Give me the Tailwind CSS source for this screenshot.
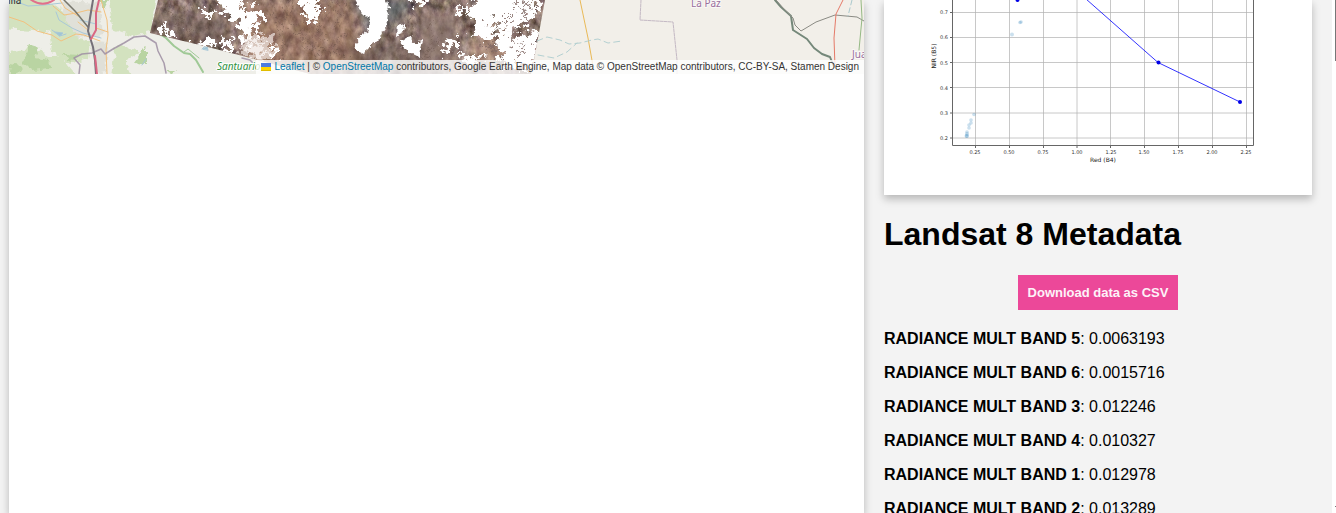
<!DOCTYPE html>
<html lang="en">
<head>
<meta charset="utf-8">
<meta name="viewport" content="width=device-width, initial-scale=1">
<title>Landsat 8 Metadata</title>
<script src="https://cdn.jsdelivr.net/npm/@tailwindcss/browser@4"></script>
</head>
<body class="h-screen overflow-hidden bg-[#f3f3f3] font-['Liberation_Sans',Arial,sans-serif] text-base text-black">
<div class="flex h-full">
  <main class="ml-[9px] min-w-0 flex-1 bg-white shadow-[0_4px_8px_rgba(0,0,0,0.25)]">
    <section class="relative h-[74px] overflow-hidden" aria-label="Map">
      <svg class="block h-full w-full" viewBox="9 0 855 74" preserveAspectRatio="xMinYMin slice" fill="none" stroke-linecap="round" stroke-linejoin="round">
        <defs>
          <clipPath id="scene"><path d="M158 0L150 33L204 46L258 60L310 74H531L534 60L545 0Z"/></clipPath>
          <filter id="terrain" x="0" y="0" width="100%" height="100%" color-interpolation-filters="sRGB">
            <feTurbulence type="fractalNoise" baseFrequency="0.13 0.09" numOctaves="5" seed="21"/>
            <feColorMatrix values=".75 0 0 0 .18  .72 .08 0 0 .07  .66 .04 .14 0 .02  0 0 0 0 1"/>
          </filter>
          <filter id="ragged" x="-10%" y="-30%" width="120%" height="160%" color-interpolation-filters="sRGB">
            <feTurbulence type="fractalNoise" baseFrequency="0.16" numOctaves="5" seed="5"/>
            <feDisplacementMap in="SourceGraphic" scale="26" xChannelSelector="R" yChannelSelector="G"/>
          </filter>
          <filter id="rough" x="-5%" y="-20%" width="110%" height="140%" color-interpolation-filters="sRGB">
            <feTurbulence type="fractalNoise" baseFrequency="0.15" numOctaves="3" seed="3"/>
            <feDisplacementMap in="SourceGraphic" scale="8" xChannelSelector="R" yChannelSelector="G"/>
          </filter>
          <filter id="soft" x="-20%" y="-20%" width="140%" height="140%"><feGaussianBlur stdDeviation="6"/></filter>
        </defs>
        <rect x="0" width="1400" height="74" fill="#f2efe9"/>
        <rect x="0" width="325" height="74" fill="#eeeee8"/>
        <g filter="url(#rough)">
          <path fill="#d3e2bf" d="M0 -9H38L60 8L80 32L78 42L56 34L34 30L0 28ZM49 30L75 38L90 42L88 58L70 64L52 52ZM0 54L28 48L42 50L46 58L62 58L84 84H0ZM108 -9H158L151 32L134 36L112 28ZM116 44L140 52L125 61L136 84H110Z"/>
          <path fill="#b9d4a2" d="M30 45L40 48L36 58L48 60L50 68L32 70L23 61ZM143 51L147 47V65L135 62ZM10 64L22 66L17 74H9ZM64 54L78 55L70 62ZM96 0L108 0L104 8ZM166 70L176 70L172 74Z"/>
          <path fill="#e0e0d8" d="M62 2L100 4L104 34L78 38L66 20ZM90 42L108 44L106 72L98 74Z"/>
        </g>
        <g stroke="#a9c8d8" stroke-width="1">
          <path d="M12 0L28 6L44 5L62 3M56 12L59 20L72 28L83 33L101 38M52 30L60 36L66 34M80 20L96 24M142 65L146 59M202 49L206 45"/>
          <path fill="#9fc5d5" d="M55 32L63 33L60 36ZM203 49L207 46L208 50Z"/>
        </g>
        <g stroke="#f3c17e" stroke-width="1">
          <path d="M9 17L24 22L37 31L52 35L61 41L76 34L84 35L100 41M53 6L64 15L76 13L88 10L101 12M60 0L65 8L78 16M101 0L107 20L108 35L106 50L107 74M78 22L88 30M96 28L108 32"/>
        </g>
        <path d="M158 33L166 38L174 46L184 53L190 54L196 60L203 72" stroke="#9fc996" stroke-width="2"/>
        <path d="M184 52L188 49L199 58" stroke="#9fc996"/>
        <path d="M64 0L75 11L88 27" stroke="#77766c" stroke-width="1.5"/>
        <path d="M79 74L80 65L74 58L82 54L92 53L101 49L105 54L113 49L124 43L134 37L145 36L156 43L158 51L164 63L166 73M242 58L250 60L256 66" stroke="#9e8ea2" stroke-width="1.5" opacity=".85"/>
        <path d="M93 0L90 18L88 31L93 47L95 60L96 74" stroke="#747078" stroke-width="2"/>
        <path d="M99 0L96 13L96 30L91 39M95 56L97 74" stroke="#d96783" stroke-width="2"/>
        <path d="M30 -1Q42 8 54 0" stroke="#e16f8b" stroke-width="2"/>
        <text x="8" y="4" font-family="Noto Sans, sans-serif" font-size="10" fill="#333">illa</text>
        <text x="217" y="70" font-family="Noto Sans, sans-serif" font-size="10" font-style="italic" fill="#2f9140" stroke="#fff" stroke-width="2" paint-order="stroke">Santuario</text>
        <g clip-path="url(#scene)">
          <rect x="140" y="-10" width="410" height="94" filter="url(#terrain)"/>
          <g filter="url(#soft)">
            <path fill="#a6775a" opacity=".45" d="M240 0H350L370 74H250Z"/>
            <path fill="#52656c" opacity=".6" d="M350 0H415L400 20L370 30Z"/>
            <path fill="#69584f" opacity=".45" d="M350 42L415 35L425 74H345ZM150 10L230 14L220 46L150 34Z"/>
            <path fill="#8b736b" opacity=".65" d="M420 14H460L450 74H415Z"/>
            <path fill="#c59b80" opacity=".5" d="M470 40H510V60H470ZM245 38L275 38L270 60H250Z"/>
          </g>
          <g filter="url(#ragged)" stroke="#604c42" stroke-width="1" opacity=".4">
            <path d="M292 -8L286 12L296 28L322 62M304 20L316 38L332 58M330 8L318 28L334 46L348 60M272 8L284 38L276 62M342 0L336 24L344 40M190 0L178 18L190 36M166 4L174 24M212 14L194 30M412 0L410 22L404 36M430 20L436 42L424 60"/>
          </g>
          <g filter="url(#ragged)" fill="#fff">
            <path d="M216 -8L236 -4L246 12L256 8L264 12L256 30L244 34L236 22L224 16ZM243 28L257 31L252 42L242 44ZM196 40L214 40L212 50L200 48ZM220 43L232 36L230 50L222 52ZM246 46L262 40L266 56L250 56ZM298 -8L318 -4L322 10L312 24L304 12ZM200 8L214 12L208 20ZM266 50L280 48L272 62ZM158 26L178 34L166 42Z"/>
            <path d="M474 -10H540L534 20L520 26L508 34L496 20L482 28L472 14ZM494 26L514 36L540 30L534 66L504 66L498 46ZM476 22L498 32L492 42L474 34ZM442 44L462 36L458 46L444 54ZM454 8L468 6L468 16ZM456 56L488 54L468 66ZM410 -8H430L420 6Z"/>
            <path fill="#eee4df" opacity=".7" d="M250 34L274 38L268 62L240 54Z"/>
          </g>
          <path filter="url(#rough)" fill="#fff" d="M352 -6H361L365 -6H384L389 12L388 24L383 31L379 40L371 43L364 54L357 51L356 40L367 32L370 19L361 10ZM396 24L406 22L404 32L395 36ZM400 40L410 37L414 43L423 39L420 58L412 54L401 45Z"/>
          <g filter="url(#ragged)" stroke="#816a65" stroke-width="2" opacity=".8"><path d="M512 -2L524 12L532 24M526 30L510 36L518 46M532 4L522 6M484 46L504 50M528 46L516 56M500 18L514 18"/></g>
        </g>
        <g>
          <path d="M580 0L588 38L593 66" stroke="#e9b957"/>
          <path d="M537 41L547 37L560 40L569 44L580 43L592 40L598 39L608 43L622 41M538 55L554 58L567 52L577 43" stroke="#b4d0d1" stroke-dasharray="6 4"/>
          <path d="M641 0L640 20L673 22L677 60V74" stroke="#c4b9c4" stroke-dasharray="3 1"/>
          <path d="M775 0L781 7L791 16L793 30L807 39L814 48L822 54L830 57L834 67" stroke="#75887a" stroke-width="2"/>
          <path d="M776 0L783 8L793 18L795 25L801 31L816 22L835 15L857 17L864 21" stroke="#8b8b84"/>
          <path d="M843 0L836 14L834 38L835 67" stroke="#e57a68"/>
          <path d="M852 0L848 16" stroke="#aac9cd" stroke-dasharray="5 3"/>
          <path d="M861 0L862 18L859 50" stroke="#95b984"/>
        </g>
        <g font-family="Noto Sans, sans-serif" font-size="10" fill="#996f9d" stroke="#fff" stroke-opacity=".6" stroke-width="2" paint-order="stroke"><text x="691" y="7">La Paz</text><text x="852" y="58">Juan</text></g>
      </svg>
      <div class="absolute right-0 bottom-0 flex h-[14px] items-center bg-white/80 px-[5px] text-[10px] leading-[14px] whitespace-pre text-[#333]"><a href="#" class="flex items-center gap-[3px] text-[#0078a8]"><svg class="h-2 w-[10px]" viewBox="0 0 12 8" preserveAspectRatio="none"><path fill="#4c7be1" d="M0 0h12v4H0z"/><path fill="#ffd500" d="M0 4h12v3H0z"/><path fill="#e0bc00" d="M0 7h12v1H0z"/></svg>Leaflet</a> | © <a href="#" class="text-[#0078a8]">OpenStreetMap</a> contributors, Google Earth Engine, Map data © OpenStreetMap contributors, CC-BY-SA, Stamen Design</div>
    </section>
  </main>
  <aside class="mx-5 w-[428px] shrink-0">
    <section class="bg-white shadow-[0_4px_8px_rgba(0,0,0,0.25)]">
      <svg class="block w-full" viewBox="884 0 428 195" role="img" aria-label="NIR (B5) against Red (B4)">
        <path stroke="#b0b0b0" stroke-opacity=".7" stroke-width="1" d="M975.5 0V145M1009.5 0V145M1043.5 0V145M1077 0V145M1110.5 0V145M1144.5 0V145M1178.5 0V145M1212.5 0V145M1246.5 0V145M953 12.5H1253M953 37.5H1253M953 62.5H1253M953 87.5H1253M953 113H1253M953 138H1253"/>
        <path d="M952.5 0V145.5H1253.5V0M950 12.5H952M950 37.5H952M950 62.5H952M950 87.5H952M950 113H952M950 138H952M975.5 146V148M1009.5 146V148M1043.5 146V148M1077 146V148M1110.5 146V148M1144.5 146V148M1178.5 146V148M1212.5 146V148M1246.5 146V148" stroke="#666" stroke-width="1" fill="none"/>
        <path d="M1086 -1L1158 62.5L1240 102" stroke="#00f" stroke-opacity=".8" fill="none"/>
        <g fill="#0000e6"><circle cx="1017.5" cy="0" r="2"/><circle cx="1158.5" cy="62.5" r="2"/><circle cx="1240" cy="102" r="2"/></g>
        <g fill="#1f77b4" fill-opacity=".23"><circle cx="1020" cy="22.5" r="1.8"/><circle cx="1021" cy="22" r="1.8"/><circle cx="1012" cy="34.5" r="2"/><circle cx="974" cy="114.5" r="1.8"/><circle cx="971" cy="120" r="1.8"/><circle cx="971" cy="123" r="1.8"/><circle cx="969" cy="125" r="1.8"/><circle cx="969" cy="128" r="1.8"/><circle cx="967" cy="132" r="1.8"/><circle cx="967" cy="134" r="2"/><circle cx="966.5" cy="136" r="2"/><circle cx="967" cy="136" r="2"/></g>
        <g font-family="DejaVu Sans, sans-serif" font-size="5" fill="#333">
          <g text-anchor="end"><text x="948" y="14">0.7</text><text x="948" y="39">0.6</text><text x="948" y="65">0.5</text><text x="948" y="90">0.4</text><text x="948" y="115">0.3</text><text x="948" y="140">0.2</text></g>
          <g text-anchor="middle"><text x="975" y="154">0.25</text><text x="1009" y="154">0.50</text><text x="1043" y="154">0.75</text><text x="1077" y="154">1.00</text><text x="1111" y="154">1.25</text><text x="1144" y="154">1.50</text><text x="1178" y="154">1.75</text><text x="1212" y="154">2.00</text><text x="1246" y="154">2.25</text></g>
          <g text-anchor="middle" font-size="6" fill="#222"><text x="1103" y="162">Red (B4)</text><text transform="translate(936 56) rotate(-90)">NIR (B5)</text></g>
        </g>
      </svg>
    </section>
    <h1 class="mt-[21px] text-[32px] leading-[37px] font-bold">Landsat 8 Metadata</h1>
    <button type="button" class="mx-auto mt-[22px] block bg-[#ec4899] p-[10px] text-[13px] leading-[15px] font-bold text-pink-50">Download data as CSV</button>
    <div class="mt-5 space-y-4 leading-[18px]">
      <p><strong>RADIANCE MULT BAND 5</strong>: 0.0063193</p>
      <p><strong>RADIANCE MULT BAND 6</strong>: 0.0015716</p>
      <p><strong>RADIANCE MULT BAND 3</strong>: 0.012246</p>
      <p><strong>RADIANCE MULT BAND 4</strong>: 0.010327</p>
      <p><strong>RADIANCE MULT BAND 1</strong>: 0.012978</p>
      <p><strong>RADIANCE MULT BAND 2</strong>: 0.013289</p>
    </div>
  </aside>
  <div class="flex w-1 shrink-0 flex-col items-end justify-between bg-white"><div class="h-[61px] w-px bg-[#777]"></div><div class="mb-1.5 h-px w-px bg-[#777]"></div></div>
</div>
</body>
</html>
